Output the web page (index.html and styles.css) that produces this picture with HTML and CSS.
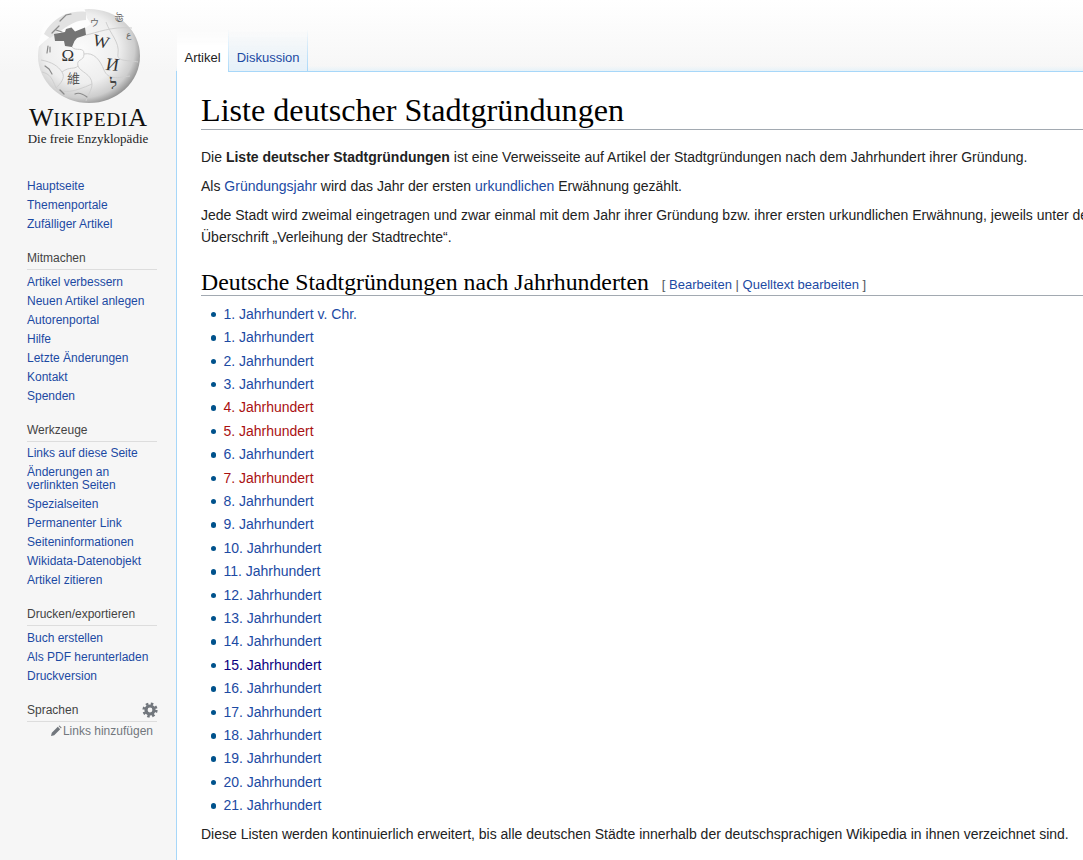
FILE: index.html
```html
<!DOCTYPE html>
<html lang="de">
<head>
<meta charset="utf-8">
<title>Liste deutscher Stadtgründungen</title>
<link rel="stylesheet" href="styles.css">
</head>
<body>
<div class="page">
  <aside class="sidebar">
    <div class="logo">
      <svg class="globe" viewBox="30 5 118 100" width="118" height="100" aria-hidden="true">
        <defs>
          <radialGradient id="sphere" cx="0.42" cy="0.42" r="0.62">
            <stop offset="0" stop-color="#fbfbfb"/>
            <stop offset="0.6" stop-color="#eeeeee"/>
            <stop offset="0.85" stop-color="#cdcdcd"/>
            <stop offset="1" stop-color="#8c8c8c"/>
          </radialGradient>
        </defs>
        <ellipse cx="89" cy="56" rx="51" ry="47" fill="url(#sphere)"/>
        <path d="M37 48 L44 24 L60 9 L84 7 L87 18 L91 24 L86 27.5 L75 31.5 L71.5 27.5 L66 29 L65 32 L54 34 L46 40 Z" fill="#fdfdfd"/>
        <path d="M44 34 C48 26 56 18 66 14 C72 12 80 11 86 12 L86 20 C78 20 70 24 62 30 L50 38 Z" fill="#e2e2e2"/>
        <path d="M54 34 L65 32 L66 29 L71.5 27.5 L75 31.5 L85 27.5 L86 35 L77 38 L74.5 41 L72 47 L65 46 L64 41 L55 41 Z" fill="#747474"/>
        <g fill="none" stroke="#cfcfcf" stroke-width="1">
          <path d="M41 60 C52 62 58 66 62 72 C66 78 60 84 56 88"/>
          <path d="M72 47 C76 52 84 46 84 54 C84 62 76 58 78 66 C80 72 92 74 92 84 C92 90 88 94 86 101"/>
          <path d="M86 35 C96 33 112 26 132 28"/>
          <path d="M84 54 C94 52 100 60 104 70 C108 80 118 78 130 76"/>
          <path d="M62 72 C70 66 74 70 78 66"/>
          <path d="M42 72 C50 74 52 78 56 88 C64 94 74 92 92 84"/>
          <path d="M106 22 C110 34 120 42 118 54 C116 62 130 60 138 62"/>
        </g>
        <g fill="none" stroke="#8a8a8a" stroke-width="1.2" stroke-linecap="round">
          <path d="M52 33 L59 26 M56 30 L62 32"/>
          <path d="M60 21 L66 15 L71 14"/>
          <path d="M48 46 L47 53 M50 47 L50 52"/>
          <path d="M45 66 L49 69 L52 74"/>
          <path d="M75 94 C79 92 83 94 87 97"/>
          <path d="M60 90 L64 94"/>
        </g>
        <text class="gl gl-o" x="61.5" y="61">Ω</text>
        <text class="gl gl-w" transform="translate(92 45) rotate(14)">W</text>
        <text class="gl gl-i" transform="translate(105 70) rotate(4) skewX(-6)">И</text>
        <text class="gl gl-c" x="67" y="83">維</text>
        <text class="gl gl-h" x="110" y="89">ל</text>
        <text class="gl gl-s" x="90" y="26">ウ</text>
        <text class="gl gl-s gl-dark" x="115" y="22">ঊ</text>
        <text class="gl gl-s" x="126" y="38">ع</text>
      </svg>
      <div class="wordmark"><span class="big">W</span>IKIPEDI<span class="big">A</span></div>
      <div class="tagline">Die freie Enzyklopädie</div>
    </div>

    <nav class="portal first">
      <ul>
        <li><a href="#">Hauptseite</a></li>
        <li><a href="#">Themenportale</a></li>
        <li><a href="#">Zufälliger Artikel</a></li>
      </ul>
    </nav>
    <nav class="portal join">
      <h3>Mitmachen</h3>
      <ul>
        <li><a href="#">Artikel verbessern</a></li>
        <li><a href="#">Neuen Artikel anlegen</a></li>
        <li><a href="#">Autorenportal</a></li>
        <li><a href="#">Hilfe</a></li>
        <li><a href="#">Letzte Änderungen</a></li>
        <li><a href="#">Kontakt</a></li>
        <li><a href="#">Spenden</a></li>
      </ul>
    </nav>
    <nav class="portal tools">
      <h3>Werkzeuge</h3>
      <ul>
        <li><a href="#">Links auf diese Seite</a></li>
        <li><a href="#">Änderungen an<br>verlinkten Seiten</a></li>
        <li><a href="#">Spezialseiten</a></li>
        <li><a href="#">Permanenter Link</a></li>
        <li><a href="#">Seiteninformationen</a></li>
        <li><a href="#">Wikidata-Datenobjekt</a></li>
        <li><a href="#">Artikel zitieren</a></li>
      </ul>
    </nav>
    <nav class="portal">
      <h3>Drucken/exportieren</h3>
      <ul>
        <li><a href="#">Buch erstellen</a></li>
        <li><a href="#">Als PDF herunterladen</a></li>
        <li><a href="#">Druckversion</a></li>
      </ul>
    </nav>
    <nav class="portal langs">
      <h3>Sprachen
        <svg class="gear" viewBox="0 0 20 20" width="16" height="16" aria-hidden="true">
          <circle cx="10" cy="10" r="5" fill="none" stroke="#72777d" stroke-width="4"/>
          <circle cx="10" cy="10" r="7.8" fill="none" stroke="#72777d" stroke-width="3.4" stroke-dasharray="3.1 3.03"/>
        </svg>
      </h3>
      <div class="addlinks">
        <svg class="pencil" viewBox="0 0 12 12" width="12" height="12" aria-hidden="true">
          <path d="M1 11 L1.8 7.8 L7.8 1.8 L10.2 4.2 L4.2 10.2 Z M8.6 1 L9.4 0.4 L11.6 2.6 L11 3.4 Z" fill="#72777d"/>
        </svg>
        <a href="#">Links hinzufügen</a>
      </div>
    </nav>
  </aside>

  <main class="main">
    <div class="tabs">
      <a class="tab selected" href="#">Artikel</a>
      <a class="tab" href="#">Diskussion</a>
    </div>
    <article class="content">
      <h1>Liste deutscher Stadtgründungen</h1>
      <p>Die <b>Liste deutscher Stadtgründungen</b> ist eine Verweisseite auf Artikel der Stadtgründungen nach dem Jahrhundert ihrer Gründung.</p>
      <p>Als <a href="#">Gründungsjahr</a> wird das Jahr der ersten <a href="#">urkundlichen</a> Erwähnung gezählt.</p>
      <p>Jede Stadt wird zweimal eingetragen und zwar einmal mit dem Jahr ihrer Gründung bzw. ihrer ersten urkundlichen Erwähnung, jeweils unter dem<br>Überschrift „Verleihung der Stadtrechte“.</p>
      <h2><span class="h2text">Deutsche Stadtgründungen nach Jahrhunderten</span><span class="edit">[ <a href="#">Bearbeiten</a> | <a href="#">Quelltext bearbeiten</a> ]</span></h2>
      <ul class="centuries">
        <li><a href="#">1. Jahrhundert v. Chr.</a></li>
        <li><a href="#">1. Jahrhundert</a></li>
        <li><a href="#">2. Jahrhundert</a></li>
        <li><a href="#">3. Jahrhundert</a></li>
        <li><a class="new" href="#">4. Jahrhundert</a></li>
        <li><a class="new" href="#">5. Jahrhundert</a></li>
        <li><a href="#">6. Jahrhundert</a></li>
        <li><a class="new" href="#">7. Jahrhundert</a></li>
        <li><a href="#">8. Jahrhundert</a></li>
        <li><a href="#">9. Jahrhundert</a></li>
        <li><a href="#">10. Jahrhundert</a></li>
        <li><a href="#">11. Jahrhundert</a></li>
        <li><a href="#">12. Jahrhundert</a></li>
        <li><a href="#">13. Jahrhundert</a></li>
        <li><a href="#">14. Jahrhundert</a></li>
        <li><a class="visited" href="#">15. Jahrhundert</a></li>
        <li><a href="#">16. Jahrhundert</a></li>
        <li><a href="#">17. Jahrhundert</a></li>
        <li><a href="#">18. Jahrhundert</a></li>
        <li><a href="#">19. Jahrhundert</a></li>
        <li><a href="#">20. Jahrhundert</a></li>
        <li><a href="#">21. Jahrhundert</a></li>
      </ul>
      <p>Diese Listen werden kontinuierlich erweitert, bis alle deutschen Städte innerhalb der deutschsprachigen Wikipedia in ihnen verzeichnet sind.</p>
    </article>
  </main>
</div>
</body>
</html>
```
FILE: styles.css
```css
html, body {
  margin: 0;
  padding: 0;
  height: 860px;
  overflow: hidden;
}
body {
  font-family: "Liberation Sans", Arial, sans-serif;
  color: #222;
}
a {
  color: #1c4aa3;
  text-decoration: none;
}
.page {
  display: flex;
  height: 860px;
  background: linear-gradient(#fff, #f6f6f6) 0 0 / 100% 72px no-repeat, #f6f6f6;
}
.sidebar {
  flex: 0 0 176px;
  width: 176px;
  font-size: 12px;
}
.logo {
  height: 176.5px;
  display: flex;
  flex-direction: column;
  align-items: flex-start;
  box-sizing: border-box;
  padding-top: 5px;
}
.globe {
  display: block;
  margin-left: 30px;
}
.gl { font-family: "Liberation Serif", serif; fill: #333; }
.gl-o { font-size: 17px; }
.gl-w { font-size: 17px; }
.gl-i { font-size: 18px; }
.gl-c { font-family: "Noto Sans CJK TC", sans-serif; font-size: 13px; fill: #555; }
.gl-h { font-size: 15px; font-weight: bold; fill: #444; }
.gl-s { font-family: "Noto Sans CJK JP", "DejaVu Sans", sans-serif; font-size: 9px; fill: #666; }
.gl-dark { font-size: 10px; fill: #444; }
.wordmark {
  width: 176px;
  text-align: center;
  font-family: "Liberation Serif", serif;
  font-size: 19px;
  line-height: 26px;
  letter-spacing: 0.9px;
  color: #111;
}
.big { font-size: 26px; letter-spacing: 0; }
.tagline {
  width: 176px;
  margin-top: -1px;
  text-align: center;
  font-family: "Liberation Serif", serif;
  font-size: 13px;
  line-height: 14px;
  color: #222;
}
.portal {
  margin: 16px 19px 0 27px;
}
.portal.first { margin-top: 0; }
.portal h3 {
  margin: 0;
  font-size: 12px;
  font-weight: normal;
  line-height: 16px;
  padding-bottom: 3px;
  color: #444;
  border-bottom: 1px solid #ddd;
  position: relative;
}
.portal ul {
  list-style: none;
  margin: 0;
  padding: 2.75px 0 0;
}
.portal.first ul { padding-top: 0; }
.portal.join ul { padding-top: 3.75px; }
.portal.tools ul { padding-top: 1.75px; }
.portal li {
  line-height: 13px;
  padding: 3px 0;
}
.gear {
  position: absolute;
  right: -1px;
  top: 0;
}
.addlinks {
  display: flex;
  justify-content: flex-end;
  align-items: center;
  gap: 1px;
  padding: 3px 4px 0 0;
  line-height: 13px;
}
.addlinks a { color: #72777d; }
.main {
  flex: 1;
  min-width: 0;
  overflow: hidden;
  padding-top: 30px;
}
.tabs {
  display: flex;
  height: 41px;
  background: linear-gradient(transparent 36px, #e6f2f9 41px);
}
.tab {
  display: block;
  box-sizing: border-box;
  height: 41px;
  padding: 0 7.5px;
  font-size: 13px;
  line-height: 56px;
  background: linear-gradient(rgba(255, 255, 255, 0), #e6f1f9);
  border-right: 1px solid;
  border-image: linear-gradient(rgba(167, 215, 249, 0), #a7d7f9) 1;
}
.tab.selected {
  margin-left: 1px;
  background: linear-gradient(rgba(255, 255, 255, 0), #fff 40%);
  color: #222;
  height: 42px;
}
.content {
  box-sizing: border-box;
  width: 1200px;
  height: 789px;
  background: #fff;
  border-top: 1px solid #a7d7f9;
  border-left: 1px solid #a7d7f9;
  padding: 20px 24px 0;
  font-size: 14px;
  line-height: 22.4px;
}
h1 {
  margin: 0 0 16px;
  font-family: "Liberation Serif", serif;
  font-weight: normal;
  font-size: 32.15px;
  line-height: 36px;
  color: #000;
  border-bottom: 1px solid #a2a9b1;
  padding-bottom: 1px;
}
.content p { margin: 0 0 6.6px; }
h2 {
  margin: 20.5px 0 6.4px;
  font-family: "Liberation Serif", serif;
  font-weight: normal;
  font-size: 23.75px;
  line-height: 26px;
  color: #000;
  border-bottom: 1px solid #a2a9b1;
}
.edit {
  font-family: "Liberation Sans", Arial, sans-serif;
  font-size: 13px;
  line-height: 1;
  vertical-align: 1px;
  color: #54595d;
  margin-left: 13px;
}
.centuries {
  list-style: none;
  margin: 0 0 6px 22.4px;
  padding: 0;
}
.centuries li {
  margin-bottom: 1px;
  position: relative;
}
.centuries li::before {
  content: "";
  position: absolute;
  left: -12.5px;
  top: 9px;
  width: 5.5px;
  height: 5.5px;
  border-radius: 50%;
  background: #00528c;
}
a.new { color: #a11; }
a.visited { color: #0b0080; }
```
